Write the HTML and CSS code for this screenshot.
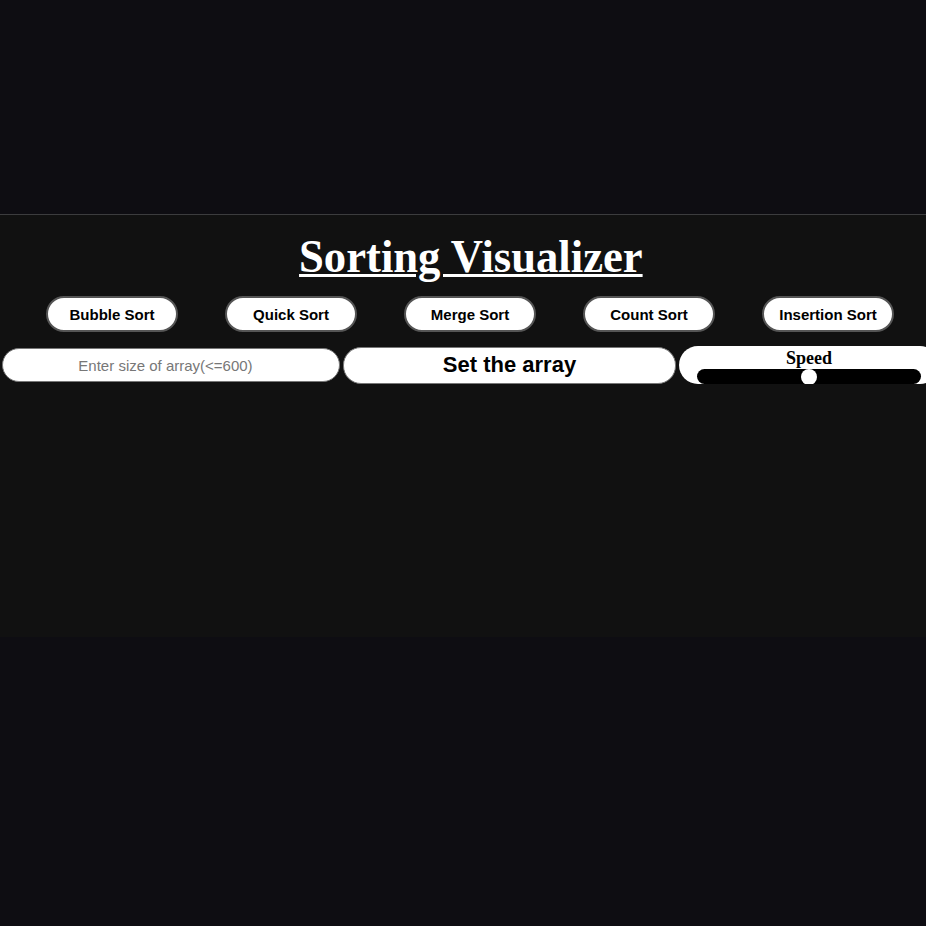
FILE: index.html
```html
<!DOCTYPE html>
<html lang="en">
<head>
<meta charset="utf-8">
<title>Sorting Visualizer</title>
<link rel="stylesheet" href="styles.css">
</head>
<body>
<div class="top"></div>
<section class="panel">
  <h1 class="title"><span class="title-text">Sorting Visualizer</span></h1>
  <div class="algos">
    <button class="algo">Bubble Sort</button>
    <button class="algo">Quick Sort</button>
    <button class="algo">Merge Sort</button>
    <button class="algo">Count Sort</button>
    <button class="algo">Insertion Sort</button>
  </div>
  <div class="controls">
    <input class="size" type="text" placeholder="Enter size of array(&lt;=600)">
    <button class="set">Set the array</button>
    <div class="speed">
      <div class="speed-label">Speed</div>
      <input class="slider" type="range" min="0" max="100" value="50">
    </div>
  </div>
</section>
</body>
</html>
```
FILE: styles.css
```css
html, body {
  margin: 0;
  padding: 0;
}
body {
  background: #0e0d12;
  overflow: hidden;
}
.top {
  height: 214px;
}
.panel {
  border-top: 1px solid #3c3c3e;
  background: #111111;
  height: 422px;
  overflow: hidden;
}
.title {
  margin: 15px 0 0;
  padding-left: 15px;
  text-align: center;
  font-family: "Liberation Serif", "Times New Roman", serif;
  font-weight: bold;
  font-size: 47px;
  line-height: 52px;
  color: #ffffff;
}
.title-text {
  display: inline-block;
  transform: scaleX(0.95);
  text-decoration: underline;
  text-decoration-thickness: 3px;
}
.algos {
  display: flex;
  gap: 47px;
  padding-left: 46px;
  margin-top: 14px;
}
.algo {
  width: 132px;
  height: 36px;
  border: 2px solid #555555;
  border-radius: 18px;
  background: #ffffff;
  color: #000000;
  font-family: "Liberation Sans", Arial, sans-serif;
  font-weight: bold;
  font-size: 15px;
  padding: 0;
}
.controls {
  display: flex;
  align-items: center;
  gap: 3px;
  margin-top: 14px;
  padding-left: 2px;
  width: 1000px;
}
.size {
  box-sizing: border-box;
  width: 338px;
  height: 34px;
  border: 1px solid #777777;
  border-radius: 17px;
  background: #ffffff;
  text-align: center;
  font-family: "Liberation Sans", Arial, sans-serif;
  font-size: 15px;
  padding: 0 11px 0 0;
  outline: none;
}
.size::placeholder {
  color: #777777;
}
.set {
  box-sizing: border-box;
  width: 333px;
  height: 37px;
  border: 1px solid #777777;
  border-radius: 18px;
  background: #ffffff;
  color: #000000;
  font-family: "Liberation Sans", Arial, sans-serif;
  font-weight: bold;
  font-size: 22px;
  padding: 0;
}
.speed {
  box-sizing: border-box;
  width: 260px;
  height: 38px;
  border-radius: 19px;
  background: #ffffff;
  padding: 1px 18px 0;
  display: flex;
  flex-direction: column;
  align-items: stretch;
  overflow: hidden;
}
.speed-label {
  text-align: center;
  font-family: "Liberation Serif", "Times New Roman", serif;
  font-weight: bold;
  font-size: 18px;
  line-height: 22px;
  color: #000000;
}
.slider {
  -webkit-appearance: none;
  appearance: none;
  margin: 0;
  width: 100%;
  height: 15px;
  background: #000000;
  border-radius: 8px;
  outline: none;
}
.slider::-webkit-slider-thumb {
  -webkit-appearance: none;
  appearance: none;
  width: 16px;
  height: 16px;
  border-radius: 50%;
  background: #ffffff;
  border: none;
}
```
